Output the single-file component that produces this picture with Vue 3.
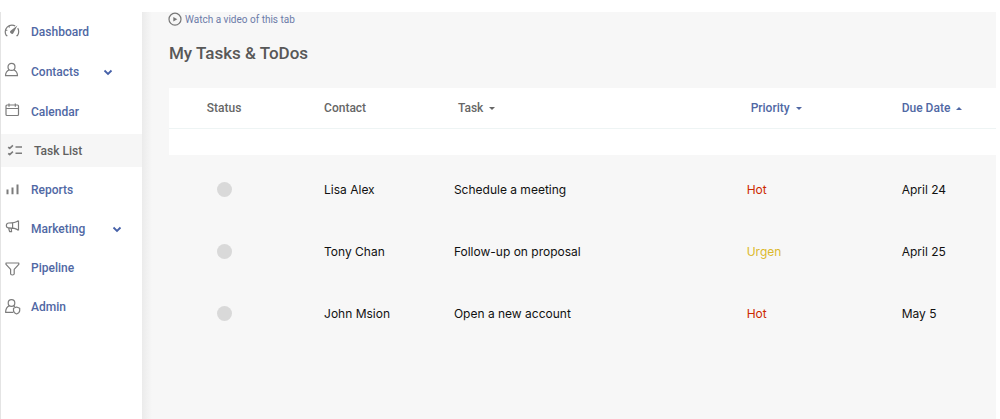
<script setup>
import { ref } from 'vue'

const groups = [
  [
    { label: 'Dashboard', icon: 'gauge' },
    { label: 'Contacts', icon: 'user', menu: 'near' },
    { label: 'Calendar', icon: 'calendar' },
  ],
  [
    { label: 'Task List', icon: 'tasks', active: true },
    { label: 'Reports', icon: 'bars' },
    { label: 'Marketing', icon: 'megaphone', menu: 'far' },
    { label: 'Pipeline', icon: 'funnel' },
    { label: 'Admin', icon: 'admin' },
  ],
]

const tasks = ref([
  { contact: 'Lisa Alex', task: 'Schedule a meeting', priority: 'Hot', due: 'April 24', done: false },
  { contact: 'Tony Chan', task: 'Follow-up on proposal', priority: 'Urgen', due: 'April 25', done: false },
  { contact: 'John Msion', task: 'Open a new account', priority: 'Hot', due: 'May 5', done: false },
])
</script>

<template>
  <div class="app">
    <nav class="sidebar" aria-label="Main">
      <ul v-for="(group, g) in groups" :key="g" class="group">
        <li v-for="item in group" :key="item.label">
          <a href="#" class="item" :class="{ active: item.active }">
            <svg class="icon" viewBox="0 0 20 20" aria-hidden="true">
              <g v-if="item.icon === 'gauge'">
                <path d="M5.4 13.6H4.4C3.5 12.4 3.2 11.200 3.200 9.800A6.700 6.700 0 0 1 9.900 3.100c1.300 0 2.400.3 3.300.9M15.700 6.200c.7 1 1 2.200 1 3.600 0 1.400-.4 2.600-1.300 3.800h-1" />
                <path d="M4 8l1.300.5M6.900 4.300l.6 1.200" />
                <path class="solid" d="M15.400 3.500l-3.800 7.200a1.800 1.800 0 1 1-2.700-2.200z" />
              </g>
              <g v-else-if="item.icon === 'user'">
                <circle cx="9.500" cy="4.900" r="3.500" />
                <path d="M7.300 7.800C5 8.800 3.600 10.600 3.500 13.700h12C15.400 10.600 14 8.800 11.700 7.800" />
              </g>
              <g v-else-if="item.icon === 'calendar'">
                <rect x="4" y="3" width="12.500" height="10.500" rx="1" />
                <path d="M4 6.500h12.500M7 1.600v3.200M13.300 1.600v3.200" />
              </g>
              <g v-else-if="item.icon === 'tasks'">
                <path class="bold" d="M3.200 6.100l1.500 1.300L7.900 4.400M3.200 12.300l1.500 1.300 3.200-3M10.500 6h6.500M10.500 12.300h6.500" />
              </g>
              <g v-else-if="item.icon === 'bars'">
                <path class="thick" d="M5.500 9.500v4.700M10.500 7.500v6.700M15.500 4.500v9.700" />
              </g>
              <g v-else-if="item.icon === 'megaphone'">
                <path d="M16.500 1.400v10.200M16.300 1.700C13.300 3.800 10.800 4 6.800 4a2.400 2.400 0 0 0 0 4.900c4 0 6.500.2 9.500 2.300M10.600 4v4.900M6.600 9l1 3.700h2L9.200 9" />
              </g>
              <g v-else-if="item.icon === 'funnel'">
                <path d="M4 5h12.800v1.400L12.200 11.300v4.500c0 1.600-3.600 1.600-3.600 0v-4.500L4 6.400z" />
              </g>
              <g v-else>
                <circle cx="9.500" cy="6" r="3.300" />
                <path d="M7.300 8.800C5 9.800 3.700 11.900 3.600 15.300h7.700M11.500 8.800l1.600.8" />
                <path d="M14.600 10l3.100 1.200v2.400c0 1.700-1.200 2.700-3.100 3.400-1.900-.7-3.100-1.700-3.100-3.400v-2.400z" />
              </g>
            </svg>
            <span class="label">{{ item.label }}</span>
            <svg v-if="item.menu" class="chevron" :class="item.menu" viewBox="0 0 10 8" aria-hidden="true">
              <path d="M1.500 2.500L5 5.900l3.500-3.400" />
            </svg>
          </a>
        </li>
      </ul>
    </nav>

    <main class="main">
      <a href="#" class="video">
        <svg class="play" viewBox="0 0 14 14" aria-hidden="true">
          <circle cx="7" cy="7.200" r="6" />
          <path d="M5.300 5L9.300 7.200 5.300 9.400z" />
        </svg>
        Watch a video of this tab
      </a>
      <h1>My Tasks &amp; ToDos</h1>

      <table>
        <colgroup>
          <col class="c-status" />
          <col class="c-contact" />
          <col class="c-task" />
          <col class="c-priority" />
          <col />
        </colgroup>
        <thead>
          <tr>
            <th scope="col" class="status">Status</th>
            <th scope="col">Contact</th>
            <th scope="col" class="inset">
              <button type="button">Task<svg viewBox="0 0 6 4" aria-hidden="true"><path d="M0 1h6L3 4z" /></svg></button>
            </th>
            <th scope="col" class="inset">
              <button type="button" class="blue">Priority<svg viewBox="0 0 6 4" aria-hidden="true"><path d="M0 1h6L3 4z" /></svg></button>
            </th>
            <th scope="col" aria-sort="ascending">
              <button type="button" class="blue">Due Date<svg viewBox="0 0 6 4" aria-hidden="true"><path d="M0 4h6L3 1z" /></svg></button>
            </th>
          </tr>
          <tr class="filler"><td colspan="5"></td></tr>
        </thead>
        <tbody>
          <tr v-for="t in tasks" :key="t.contact">
            <td class="status">
              <input v-model="t.done" type="checkbox" :aria-label="t.task" />
            </td>
            <td>{{ t.contact }}</td>
            <td>{{ t.task }}</td>
            <td :class="t.priority.toLowerCase()">{{ t.priority }}</td>
            <td>{{ t.due }}</td>
          </tr>
        </tbody>
      </table>
    </main>
  </div>
</template>

<style>
body {
  margin: 0;
  background: #fff;
}
</style>

<style scoped>
.app {
  box-sizing: border-box;
  display: flex;
  min-height: 100vh;
  padding: 12px 4px 0 0;
  font-family: Roboto, "Liberation Sans", sans-serif;
}
.sidebar {
  box-sizing: border-box;
  flex: 0 0 142px;
  display: flex;
  flex-direction: column;
  gap: 6px;
  padding-top: 3px;
  border-left: 1px solid #e4e4e4;
}
.group {
  display: grid;
  gap: 6px;
  margin: 0;
  padding: 0;
  list-style: none;
}
.group:first-child {
  gap: 7px;
}
.item {
  display: flex;
  align-items: center;
  height: 33px;
  padding-left: 1px;
  color: #5068a4;
  font-size: 12px;
  font-weight: 500;
  line-height: 16px;
  text-decoration: none;
}
.item.active {
  padding-left: 4px;
  background: #f6f6f6;
  color: #60605e;
}
.icon {
  flex: none;
  width: 20px;
  height: 20px;
  margin-right: 9px;
  fill: none;
  stroke: #7c7c7c;
  stroke-width: 1.2;
  stroke-linejoin: round;
}
.icon .solid {
  fill: #7c7c7c;
  stroke: none;
}
.icon .bold {
  stroke-width: 1.6;
}
.icon .thick {
  stroke-width: 2;
}
.chevron {
  width: 10px;
  height: 8px;
  fill: none;
  stroke: #4560a8;
  stroke-width: 1.8;
}
.chevron.near {
  margin-left: 24px;
}
.chevron.far {
  margin-left: 27px;
}
.main {
  flex: 1;
  min-width: 0;
  padding-left: 27px;
  background: linear-gradient(90deg, #ebebeb, #f7f7f7 10px);
}
.video {
  display: flex;
  align-items: center;
  gap: 3px;
  width: max-content;
  height: 14px;
  margin-left: -1px;
  color: #6c7ba8;
  font-size: 10px;
  text-decoration: none;
}
.play {
  width: 14px;
  height: 14px;
  fill: none;
  stroke: #777;
  stroke-width: 1.2;
}
.play path {
  fill: #777;
  stroke: none;
}
h1 {
  margin: 16px 0 24px;
  color: #585858;
  font-size: 17px;
  font-weight: 500;
  line-height: 22px;
}
table {
  width: 100%;
  table-layout: fixed;
  border-collapse: collapse;
}
.c-status,
.c-priority {
  width: 18.75%;
}
.c-contact {
  width: 15.7%;
}
.c-task {
  width: 35.4%;
}
thead {
  background: #fff;
}
th {
  height: 40px;
  padding: 0;
  border-bottom: 1px solid #eef4f4;
  color: #666;
  font-size: 12px;
  font-weight: 500;
  text-align: left;
}
th.inset {
  padding-left: 4px;
}
th.status,
td.status {
  padding-right: 45px;
  text-align: center;
}
th button {
  display: flex;
  align-items: center;
  gap: 6px;
  padding: 0;
  border: 0;
  background: none;
  color: #666;
  font: inherit;
  cursor: pointer;
}
th button.blue {
  color: #5068a4;
}
th svg {
  width: 6px;
  height: 4px;
  fill: currentColor;
}
.filler td {
  height: 26px;
  padding: 0;
}
tbody td {
  padding: 27px 0 19px;
  color: #111;
  font-family: Inter, "Liberation Sans", sans-serif;
  font-size: 12px;
  line-height: 16px;
  vertical-align: top;
}
tbody .hot {
  color: #cc2a00;
}
tbody .urgen {
  color: #dcb92c;
}
td input {
  display: block;
  width: 15px;
  height: 15px;
  margin: 0 auto;
  border-radius: 50%;
  background: #d9d9d9;
  appearance: none;
}
td input:checked {
  background: #5068a4;
}
</style>
